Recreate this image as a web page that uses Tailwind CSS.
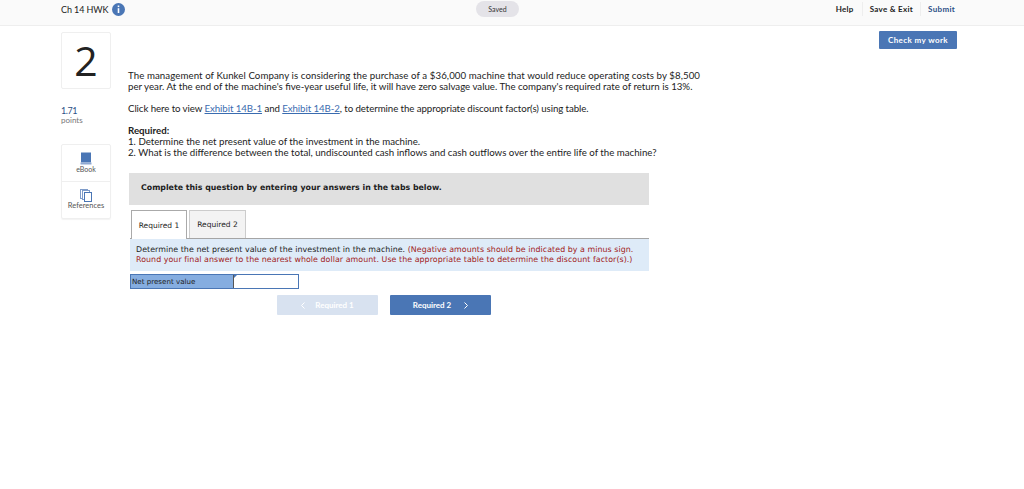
<!DOCTYPE html>
<html lang="en">
<head>
    <meta charset="UTF-8">
    <title>Ch 14 HWK</title>
    <script src="https://cdn.jsdelivr.net/npm/@tailwindcss/browser@4"></script>
</head>
<body class="bg-white h-[489px] overflow-hidden font-['Lato',sans-serif] text-[#222]">
    <!-- Top bar -->
    <header class="h-[26px] bg-[#fafafa] border-b border-[#eeeeee] flex items-center justify-between pl-[61px] pr-[69px] relative">
        <div class="flex items-center gap-[5px] -mt-[6px]">
            <span class="text-[9px] tracking-[-0.1px] w-[46px] whitespace-nowrap">Ch 14 HWK</span>
            <svg width="13" height="13" viewBox="0 0 13 13">
                <circle cx="6.5" cy="6.5" r="6.5" fill="#4a76b5"/>
                <rect x="5.7" y="2.5" width="1.6" height="1.6" fill="#fff"/>
                <rect x="5.7" y="5.2" width="1.6" height="4.8" fill="#fff"/>
            </svg>
        </div>
        <div class="absolute left-[476px] top-[1px] w-[43px] h-[16px] rounded-full bg-[#e4e3e8] flex items-center justify-center text-[7px] text-[#333]">Saved</div>
        <nav class="flex items-center text-[8px] font-bold tracking-[0.3px] -mt-[7px]">
            <span class="pr-[8px] border-r border-[#eeeeee] leading-[14px]">Help</span>
            <span class="px-[7px] border-r border-[#eeeeee] leading-[14px]">Save &amp; Exit</span>
            <span class="pl-[7px] text-[#2c4f86] leading-[14px]">Submit</span>
        </nav>
    </header>

    <main class="flex pl-[61px] pr-[67px]">
        <!-- Left rail -->
        <aside class="w-[50px] shrink-0 pt-[6px]">
            <div class="h-[57px] border border-[#efefef] rounded-[2px] flex items-center justify-center text-[41px] leading-none font-['Open_Sans',sans-serif] text-[#222]">2</div>
            <div class="mt-[17px] text-[9px] leading-[10px] tracking-[-0.4px] text-[#2c4f86]">1.71</div>
            <div class="text-[8px] leading-[9px] text-[#777]">points</div>
            <div class="mt-[19px] h-[75px] border border-[#efefef] rounded-[2px] shadow-[0_1px_1px_rgba(0,0,0,0.05)] flex flex-col">
                <div class="h-[37px] border-b border-[#efefef] flex flex-col items-center pt-[7px]">
                    <svg width="12" height="13" viewBox="0 0 12 13">
                        <path d="M1 0.5h10v10h-10z" fill="#4a76b5"/>
                        <path d="M0.5 10.5h11v2h-11z" fill="#8fa9d3"/>
                    </svg>
                    <span class="text-[7px] leading-[8px] text-[#555]">eBook</span>
                </div>
                <div class="flex-1 flex flex-col items-center pt-[7px]">
                    <svg width="12" height="13" viewBox="0 0 12 13" fill="#fff">
                        <rect x="0.5" y="0.5" width="7" height="9" stroke="#7f9cc9"/>
                        <rect x="2.5" y="1.5" width="7" height="9" stroke="#7f9cc9"/>
                        <rect x="4.5" y="3.5" width="7" height="9" stroke="#4a76b5"/>
                    </svg>
                    <span class="text-[7.5px] leading-[8px] text-[#555]">References</span>
                </div>
            </div>
        </aside>

        <!-- Question -->
        <section class="w-[521px] ml-[17px] shrink-0 pt-[44px] text-[9.7px] leading-[11px]">
            <p class="w-[590px] tracking-[0.07px]">The management of Kunkel Company is considering the purchase of a $36,000 machine that would reduce operating costs by $8,500<br><span class="tracking-normal">per year. At the end of the machine's five-year useful life, it will have zero salvage value. The company's required rate of return is 13%.</span></p>
            <p class="mt-[11px] w-[590px] tracking-[-0.08px]">Click here to view <span class="text-[#3a6cb0] underline">Exhibit 14B-1</span> and <span class="text-[#3a6cb0] underline">Exhibit 14B-2</span>, to determine the appropriate discount factor(s) using table.</p>
            <p class="mt-[11px] font-bold">Required:</p>
            <p class="w-[590px]">1. Determine the net present value of the investment in the machine.</p>
            <p class="w-[590px]">2. What is the difference between the total, undiscounted cash inflows and cash outflows over the entire life of the machine?</p>

            <div class="ml-[1px] mt-[15px] h-[32px] bg-[#e0e0e0] flex items-center pl-[12px] pb-[3px] font-['DejaVu_Sans',sans-serif] font-bold text-[7.85px]">Complete this question by entering your answers in the tabs below.</div>

            <div class="ml-[3px] mt-[5px] flex gap-[2px] h-[28px] font-['DejaVu_Sans',sans-serif] text-[7.5px]">
                <div class="w-[56px] border border-b-0 border-[#aaaaaa] bg-white flex items-center justify-center relative z-10 h-[29px]">Required 1</div>
                <div class="w-[57px] border border-b-0 border-[#cccccc] bg-[#f3f3f3] flex items-center justify-center">Required 2</div>
            </div>
            <div class="ml-[2px] border-t border-[#a5a5a5] bg-[#deebf8] h-[33px] px-[6px] pt-[6px] font-['DejaVu_Sans',sans-serif] text-[7.9px] tracking-[0.05px] leading-[10px] whitespace-nowrap">
                Determine the net present value of the investment in the machine. <span class="text-[#a11b1b]">(Negative amounts should be indicated by a minus sign.<br>Round your final answer to the nearest whole dollar amount. Use the appropriate table to determine the discount factor(s).)</span>
            </div>
            <div class="ml-[2px] mt-[3px] w-[169px] h-[15px] flex border border-[#4a76b5] relative">
                <div class="w-[103px] bg-[#85ade0] border-r border-[#555] pl-[1px] font-['DejaVu_Sans',sans-serif] text-[7.1px] leading-[13px]">Net present value</div>
                <div class="flex-1 bg-white"></div>
                <div class="absolute left-[103px] top-0 w-0 h-0 border-t-[3px] border-r-[3px] border-t-[#4a76b5] border-r-transparent"></div>
            </div>
            <div class="mt-[6px] ml-[149px] flex gap-[12px] text-[8px] font-bold text-white">
                <div class="w-[101px] h-[20px] bg-[#d8e2f0] rounded-[1px] flex items-center justify-center gap-[10px]">
                    <svg width="4" height="7" viewBox="0 0 4 7" fill="none" stroke="#fff"><path d="M3.5 0.5L0.5 3.5L3.5 6.5"/></svg>
                    <span>Required 1</span>
                </div>
                <div class="w-[101px] h-[20px] bg-[#4a76b5] rounded-[1px] flex items-center justify-center gap-[13px]">
                    <span>Required 2</span>
                    <svg width="4" height="7" viewBox="0 0 4 7" fill="none" stroke="#fff"><path d="M0.5 0.5L3.5 3.5L0.5 6.5"/></svg>
                </div>
            </div>
        </section>

        <!-- Check my work -->
        <div class="ml-auto pt-[5px]">
            <div class="w-[78px] h-[18px] bg-[#4a76b5] rounded-[1px] text-white text-[8px] tracking-[0.4px] font-bold flex items-center justify-center">Check my work</div>
        </div>
    </main>
</body>
</html>
